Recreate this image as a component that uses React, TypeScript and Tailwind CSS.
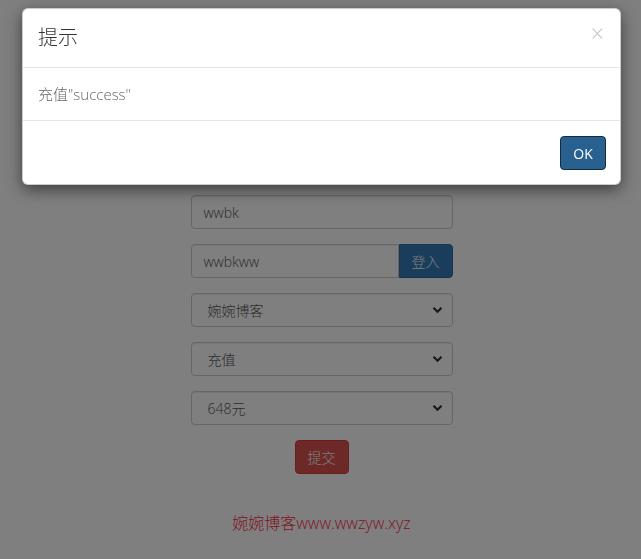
import React from "react";

const font = '"Open Sans", "Noto Sans CJK SC", sans-serif';

function Chevron() {
  return (
    <svg
      className="pointer-events-none absolute right-[9px] top-1/2 -translate-y-1/2"
      width="11"
      height="8"
      viewBox="0 0 11 8"
    >
      <path d="M1.5 1.8 L5.5 5.8 L9.5 1.8" fill="none" stroke="#333" strokeWidth="2.2" />
    </svg>
  );
}

function FakeSelect({ value }: { value: string }) {
  return (
    <div className="relative flex h-[34px] w-full items-center rounded-[4px] border border-[#ccc] bg-white pl-[16px] text-[14px] font-light text-[#555] shadow-[inset_0_1px_1px_rgba(0,0,0,0.075)]">
      <span>{value}</span>
      <Chevron />
    </div>
  );
}

export default function App() {
  return (
    <div className="relative min-h-[559px] w-full overflow-hidden bg-white" style={{ fontFamily: font }}>
      {/* page */}
      <div className="mx-auto flex w-[262px] translate-x-[1px] flex-col pt-[195px]">
        <div className="flex h-[34px] items-center rounded-[4px] border border-[#ccc] bg-white px-[12px] text-[14px] font-light text-[#555] shadow-[inset_0_1px_1px_rgba(0,0,0,0.075)]">
          wwbk
        </div>
        <div className="mt-[15px] flex h-[34px]">
          <div className="flex flex-1 items-center rounded-l-[4px] border border-[#ccc] bg-white px-[12px] text-[14px] font-light text-[#555] shadow-[inset_0_1px_1px_rgba(0,0,0,0.075)]">
            wwbkww
          </div>
          <div className="flex w-[54px] items-center justify-center rounded-r-[4px] border border-[#2e6da4] bg-[#337ab7] text-[14px] font-light text-white">
            登入
          </div>
        </div>
        <div className="mt-[15px]">
          <FakeSelect value="婉婉博客" />
        </div>
        <div className="mt-[15px]">
          <FakeSelect value="充值" />
        </div>
        <div className="mt-[15px]">
          <FakeSelect value="648元" />
        </div>
        <div className="mt-[15px] flex justify-center">
          <div className="flex h-[34px] w-[54px] items-center justify-center rounded-[4px] border border-[#d43f3a] bg-[#d9534f] text-[14px] font-light text-white">
            提交
          </div>
        </div>
        <div className="mt-[38px] flex justify-center whitespace-nowrap text-[16px] font-light leading-[22px] text-[#ff2a44]">
          婉婉博客www.wwzyw.xyz
        </div>
      </div>

      {/* backdrop */}
      <div className="fixed inset-0 bg-black/50" />

      {/* modal */}
      <div className="absolute left-[22px] top-[8px] w-[599px] rounded-[6px] border border-black/20 bg-white shadow-[0_5px_15px_rgba(0,0,0,0.5)]">
        <div className="relative flex h-[59px] items-center border-b border-[#e5e5e5] px-[15px]">
          <span className="text-[20px] font-light leading-[28px] text-[#333]">提示</span>
          <span className="absolute right-[16px] top-[13px] text-[23px] font-light leading-[23px] text-[#c4c4c4]">
            ×
          </span>
        </div>
        <div className="flex h-[53px] items-center border-b border-[#e5e5e5] px-[15px] text-[15px] font-light leading-[22px] text-[#666]">
          充值"success"
        </div>
        <div className="flex h-[63px] items-start justify-end px-[14px] pt-[15px]">
          <div className="flex h-[34px] w-[46px] items-center justify-center rounded-[4px] border border-[#122b40] bg-[#286090] text-[14px] text-white">
            OK
          </div>
        </div>
      </div>
    </div>
  );
}
